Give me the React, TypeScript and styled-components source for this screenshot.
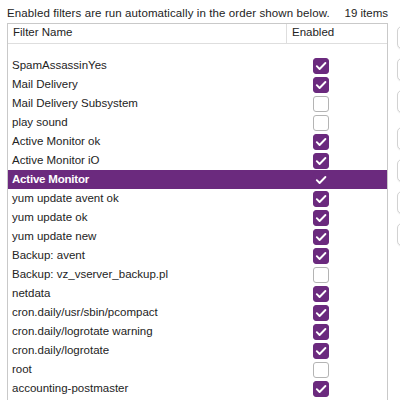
import React from "react";
import styled, { createGlobalStyle } from "styled-components";

const Global = createGlobalStyle`
  html, body { margin: 0; padding: 0; background: #ffffff; }
  body { width: 400px; height: 400px; overflow: hidden; font-family: "Liberation Sans", Arial, sans-serif; }
`;

const Page = styled.div`
  display: flex;
  align-items: flex-start;
  gap: 9px;
  padding-left: 7px;
  width: 400px;
  height: 400px;
  overflow: hidden;
  box-sizing: border-box;
  color: #232323;
  font-size: 11.5px;
`;

const Main = styled.div`
  width: 381px;
  flex: none;
  display: flex;
  flex-direction: column;
`;

const TitleRow = styled.div`
  display: flex;
  justify-content: space-between;
  height: 23px;
  padding-top: 6px;
  box-sizing: border-box;
  line-height: 14px;
  white-space: nowrap;
`;

const TitleText = styled.span`
  letter-spacing: 0.1px;
`;

const Table = styled.div`
  border: 1px solid #c9c9c9;
  border-bottom: none;
  background: #fff;
  height: 380px;
  overflow: hidden;
`;

const Header = styled.div`
  display: grid;
  grid-template-columns: 279px 1fr;
  height: 19px;
  border-bottom: 1px solid #dedede;
`;

const HeadCell = styled.div<{ $divider?: boolean }>`
  line-height: 17px;
  padding-left: 5px;
  border-right: ${(p) => (p.$divider ? "1px solid #dedede" : "none")};
`;

const Body = styled.div`
  padding-top: 12px;
`;

const Row = styled.div<{ $selected?: boolean }>`
  display: grid;
  grid-template-columns: 280px 1fr;
  height: 19px;
  line-height: 19px;
  background: ${(p) => (p.$selected ? "#6b2a7e" : "transparent")};
  color: ${(p) => (p.$selected ? "#ffffff" : "#232323")};
  font-weight: ${(p) => (p.$selected ? 700 : 400)};
  letter-spacing: ${(p) => (p.$selected ? "-0.2px" : "0")};
`;

const NameCell = styled.div`
  padding-left: 4px;
  white-space: nowrap;
  overflow: hidden;
`;

const CheckCell = styled.div`
  display: flex;
  align-items: center;
  padding-left: 25px;
`;

const Box = styled.div<{ $checked: boolean }>`
  width: 16px;
  height: 16px;
  box-sizing: border-box;
  border-radius: 3px;
  background: ${(p) => (p.$checked ? "#6b2a7e" : "#ffffff")};
  border: 1px solid ${(p) => (p.$checked ? "#6b2a7e" : "#b4b4b4")};
  display: flex;
  align-items: center;
  justify-content: center;
`;

const Side = styled.div`
  display: flex;
  flex-direction: column;
  gap: 9px;
  padding-top: 26px;
`;

const SideButton = styled.div<{ $spaced?: boolean }>`
  width: 60px;
  height: 23px;
  box-sizing: border-box;
  border: 1px solid #d2d2d2;
  border-radius: 5px;
  background: #fff;
  box-shadow: 0 1px 1px rgba(0, 0, 0, 0.06);
  margin-top: ${(p) => (p.$spaced ? "5px" : "0")};
`;

const Check = () => (
  <svg width="12" height="12" viewBox="0 0 12 12">
    <path d="M1.8 6.2 L4.6 9 L10.4 3" fill="none" stroke="#fff" strokeWidth="1.9" strokeLinecap="round" strokeLinejoin="round" />
  </svg>
);

const rows: [string, boolean][] = [
  ["SpamAssassinYes", true],
  ["Mail Delivery", true],
  ["Mail Delivery Subsystem", false],
  ["play sound", false],
  ["Active Monitor ok", true],
  ["Active Monitor iO", true],
  ["Active Monitor", true],
  ["yum update avent ok", true],
  ["yum update ok", true],
  ["yum update new", true],
  ["Backup: avent", true],
  ["Backup: vz_vserver_backup.pl", false],
  ["netdata", true],
  ["cron.daily/usr/sbin/pcompact", true],
  ["cron.daily/logrotate warning", true],
  ["cron.daily/logrotate", true],
  ["root", false],
  ["accounting-postmaster", true],
  ["", true],
];

export default function App() {
  return (
    <>
      <Global />
      <Page>
        <Main>
          <TitleRow>
            <TitleText>Enabled filters are run automatically in the order shown below.</TitleText>
            <span>19 items</span>
          </TitleRow>
          <Table>
            <Header>
              <HeadCell $divider>Filter Name</HeadCell>
              <HeadCell>Enabled</HeadCell>
            </Header>
            <Body>
              {rows.map(([name, on], i) => (
                <Row key={i} $selected={i === 6}>
                  <NameCell>{name}</NameCell>
                  <CheckCell>
                    <Box $checked={on}>{on && <Check />}</Box>
                  </CheckCell>
                </Row>
              ))}
            </Body>
          </Table>
        </Main>
        <Side>
          <SideButton />
          <SideButton />
          <SideButton />
          <SideButton $spaced />
          <SideButton />
          <SideButton />
          <SideButton />
        </Side>
      </Page>
    </>
  );
}
